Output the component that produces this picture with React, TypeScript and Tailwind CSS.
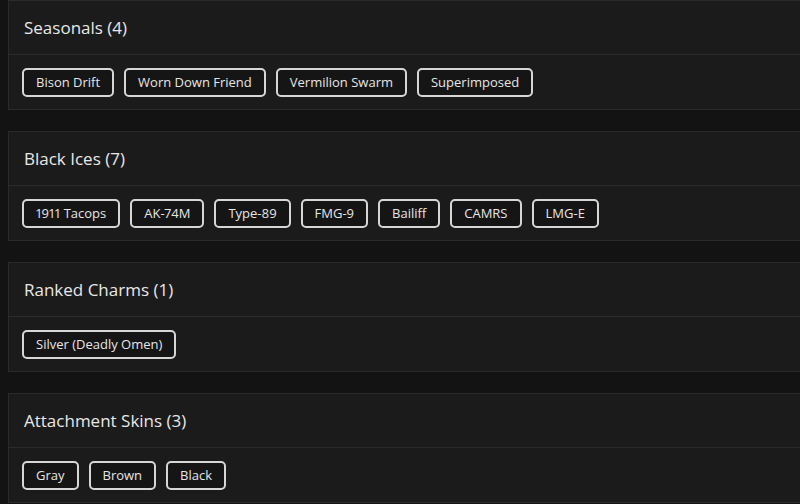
const sections = [
  { title: 'Seasonals', items: ['Bison Drift', 'Worn Down Friend', 'Vermilion Swarm', 'Superimposed'] },
  { title: 'Black Ices', items: ['1911 Tacops', 'AK-74M', 'Type-89', 'FMG-9', 'Bailiff', 'CAMRS', 'LMG-E'] },
  { title: 'Ranked Charms', items: ['Silver (Deadly Omen)'] },
  { title: 'Attachment Skins', items: ['Gray', 'Brown', 'Black'] },
];

const Section = ({ title, items }: { title: string; items: string[] }) => (
  <div className="border border-[#2a2a2a] bg-[#1b1b1b]">
    <div className="flex h-[54px] items-center border-b border-[#2a2a2a] px-[15px]">
      <h2 className="text-[17px] font-medium text-[#e8e8e8]">
        {title} ({items.length})
      </h2>
    </div>
    <div className="flex h-[54px] items-center gap-[10px] px-[13px] pt-px">
      {items.map((item) => (
        <span
          key={item}
          className="flex h-[29px] items-center rounded-[5px] border-2 border-[#d6d6d6] bg-[#151515] px-[12px] text-[13px] text-[#e6e6e6] proportional-nums"
        >
          {item}
        </span>
      ))}
    </div>
  </div>
);

export default function App() {
  return (
    <div
      className="h-[504px] w-[800px] overflow-hidden bg-[#131313]"
      style={{ fontFamily: '"Open Sans", sans-serif' }}
    >
      <div className="flex w-[830px] flex-col gap-[21px] pl-2">
        {sections.map((s) => (
          <Section key={s.title} {...s} />
        ))}
      </div>
    </div>
  );
}
